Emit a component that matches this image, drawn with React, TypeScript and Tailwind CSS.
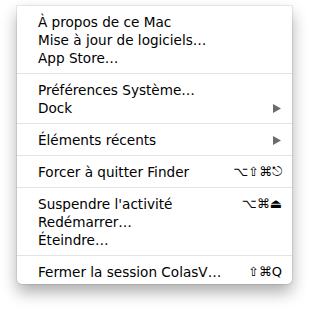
const font = { fontFamily: '"DejaVu Sans", "Liberation Sans", sans-serif' };

type Item = { label: string; shortcut?: string; submenu?: boolean };

const groups: Item[][] = [
  [
    { label: "À propos de ce Mac" },
    { label: "Mise à jour de logiciels…" },
    { label: "App Store…" },
  ],
  [{ label: "Préférences Système…" }, { label: "Dock", submenu: true }],
  [{ label: "Éléments récents", submenu: true }],
  [{ label: "Forcer à quitter Finder", shortcut: "⌥⇧⌘⎋" }],
  [
    { label: "Suspendre l'activité", shortcut: "⌥⌘⏏" },
    { label: "Redémarrer…" },
    { label: "Éteindre…" },
  ],
  [{ label: "Fermer la session ColasV…", shortcut: "⇧⌘Q" }],
];

function Arrow() {
  return (
    <svg width="8" height="9" viewBox="0 0 8 9" className="mr-[1px]">
      <path d="M0 0 L8 4.5 L0 9 Z" fill="#6b6b6b" />
    </svg>
  );
}

function Row({ item }: { item: Item }) {
  return (
    <div className="flex h-[18px] items-center justify-between pl-[21px] pr-[10px] text-[13.6px] leading-[18px] text-black">
      <span>{item.label}</span>
      {item.shortcut && <span className="text-[13px]">{item.shortcut}</span>}
      {item.submenu && <Arrow />}
    </div>
  );
}

export default function App() {
  return (
    <div className="h-[311px] w-[309px] bg-white pl-[17px] pt-[6px]" style={font}>
      <div className="w-[275px] rounded-b-[5px] bg-white pb-[3px] pt-[7px] shadow-[0_0_0_1px_rgba(0,0,0,0.07),0_8px_16px_rgba(0,0,0,0.33)]">
        {groups.map((g, i) => (
          <div key={i}>
            {i > 0 && <div className="mb-[7px] mt-[6px] h-px bg-[#e3e3e3]" />}
            {g.map((item) => (
              <Row key={item.label} item={item} />
            ))}
          </div>
        ))}
      </div>
    </div>
  );
}
